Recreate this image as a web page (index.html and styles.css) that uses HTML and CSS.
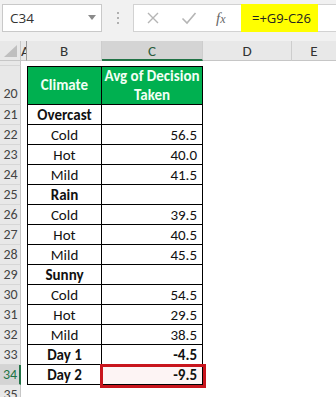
FILE: index.html
```html
<!DOCTYPE html>
<html>
<head>
<meta charset="utf-8">
<link rel="stylesheet" href="styles.css">
</head>
<body>
<div class="app">
  <div class="fbar">
    <div class="namebox">
      <span class="nb-text">C34</span>
      <svg class="nb-arrow" width="8" height="5" viewBox="0 0 8 5"><path d="M0 0h8L4 5z" fill="#8a8a8a"/></svg>
    </div>
    <div class="dots"><i></i><i></i><i></i></div>
    <div class="fbox">
      <svg class="ico" width="14" height="14" viewBox="0 0 14 14"><path d="M2 2l10 10M12 2L2 12" stroke="#b5b5b5" stroke-width="1.4" fill="none"/></svg>
      <svg class="ico chk" width="16" height="14" viewBox="0 0 16 14"><path d="M1.5 7.5l4.5 4.5L14.5 2" stroke="#b5b5b5" stroke-width="1.6" fill="none"/></svg>
      <span class="fx">f<span class="x">x</span></span>
      <div class="formula">=+G9-C26</div>
    </div>
  </div>
  <div class="sheet">
    <div class="corner"><svg width="13" height="12" viewBox="0 0 13 12"><path d="M13 0V12H0z" fill="#bfbfbf"/></svg></div>
    <div class="ch cha">A</div>
    <div class="ch">B</div>
    <div class="ch sel">C</div>
    <div class="ch">D</div>
    <div class="ch last">E</div>

    <div class="rh r19"></div><div class="c r19"></div><div class="c r19"></div><div class="c r19"></div><div class="c r19"></div><div class="c r19"></div>

    <div class="rh r20">20</div><div class="c"></div>
    <div class="t tb th">Climate</div><div class="t tc th">Avg of Decision Taken</div>
    <div class="c"></div><div class="c"></div>

    <div class="rh">21</div><div class="c"></div><div class="t tb b">Overcast</div><div class="t tc"></div><div class="c"></div><div class="c"></div>
    <div class="rh">22</div><div class="c"></div><div class="t tb">Cold</div><div class="t tc">56.5</div><div class="c"></div><div class="c"></div>
    <div class="rh">23</div><div class="c"></div><div class="t tb">Hot</div><div class="t tc">40.0</div><div class="c"></div><div class="c"></div>
    <div class="rh">24</div><div class="c"></div><div class="t tb">Mild</div><div class="t tc">41.5</div><div class="c"></div><div class="c"></div>
    <div class="rh">25</div><div class="c"></div><div class="t tb b">Rain</div><div class="t tc"></div><div class="c"></div><div class="c"></div>
    <div class="rh">26</div><div class="c"></div><div class="t tb">Cold</div><div class="t tc">39.5</div><div class="c"></div><div class="c"></div>
    <div class="rh">27</div><div class="c"></div><div class="t tb">Hot</div><div class="t tc">40.5</div><div class="c"></div><div class="c"></div>
    <div class="rh">28</div><div class="c"></div><div class="t tb">Mild</div><div class="t tc">45.5</div><div class="c"></div><div class="c"></div>
    <div class="rh">29</div><div class="c"></div><div class="t tb b">Sunny</div><div class="t tc"></div><div class="c"></div><div class="c"></div>
    <div class="rh">30</div><div class="c"></div><div class="t tb">Cold</div><div class="t tc">54.5</div><div class="c"></div><div class="c"></div>
    <div class="rh">31</div><div class="c"></div><div class="t tb">Hot</div><div class="t tc">29.5</div><div class="c"></div><div class="c"></div>
    <div class="rh">32</div><div class="c"></div><div class="t tb">Mild</div><div class="t tc">38.5</div><div class="c"></div><div class="c"></div>
    <div class="rh">33</div><div class="c"></div><div class="t tb b">Day 1</div><div class="t tc b">-4.5</div><div class="c"></div><div class="c"></div>
    <div class="rh rsel">34</div><div class="c"></div><div class="t tb b">Day 2</div><div class="t tc b csel">-9.5</div><div class="c"></div><div class="c"></div>
    <div class="rh">35</div><div class="c"></div><div class="c"></div><div class="c"></div><div class="c"></div><div class="c"></div>
    <div class="redbox"></div>
  </div>
</div>
</body>
</html>
```

FILE: styles.css
```css
html, body {
  margin: 0;
  padding: 0;
  background: #ffffff;
}
body {
  width: 336px;
  height: 397px;
  overflow: hidden;
  font-family: Carlito, Lato, "Liberation Sans", sans-serif;
}
.app {
  display: flex;
  flex-direction: column;
}
.fbar {
  height: 41px;
  background: #f1f1f1;
  display: flex;
  align-items: flex-start;
  box-sizing: border-box;
  padding-top: 4px;
}
.namebox {
  margin-left: 2px;
  width: 100px;
  height: 28px;
  box-sizing: border-box;
  background: #fff;
  border: 1px solid #c9c9c9;
  display: flex;
  align-items: center;
  justify-content: space-between;
  padding: 0 5px 0 7px;
}
.nb-text {
  font-family: "Open Sans", "Liberation Sans", sans-serif;
  font-size: 13.5px;
  color: #333;
}
.nb-arrow {
  margin-top: -2px;
}
.dots {
  width: 31px;
  height: 28px;
  display: flex;
  flex-direction: column;
  align-items: center;
  justify-content: center;
  gap: 3px;
}
.dots i {
  width: 2px;
  height: 2px;
  background: #b0b0b0;
  display: block;
}
.fbox {
  flex: 1;
  height: 28px;
  box-sizing: border-box;
  background: #fff;
  border: 1px solid #d2d2d2;
  border-right: none;
  display: flex;
  align-items: center;
  padding-left: 12px;
}
.ico {
  display: block;
  flex: none;
}
.chk {
  margin-left: 21px;
}
.fx {
  flex: none;
  margin-left: 19px;
  font-family: "Liberation Serif", serif;
  font-style: italic;
  font-size: 15px;
  color: #666;
  width: 19px;
}
.fx .x {
  font-size: 12px;
}
.formula {
  flex: none;
  margin-left: 6px;
  width: 77px;
  height: 28px;
  margin-top: -1px;
  margin-bottom: -1px;
  box-sizing: border-box;
  background: #ffff00;
  display: flex;
  align-items: center;
  padding-left: 11px;
  white-space: nowrap;
  font-family: "Open Sans", "Liberation Sans", sans-serif;
  font-size: 13px;
  color: #222;
}
.sheet {
  position: relative;
  display: grid;
  grid-template-columns: 21px 6px 75px 101px 89px 1fr;
  grid-template-rows: 20px 5px 39px repeat(15, 20px);
}
.corner {
  background: #e8e8e8;
  border-right: 1px solid #c6c6c6;
  border-bottom: 1px solid #c6c6c6;
  box-sizing: border-box;
  display: flex;
  align-items: flex-end;
  justify-content: flex-end;
  padding: 0 3px 3px 0;
}
.ch {
  background: #e8e8e8;
  border-right: 1px solid #cdcdcd;
  border-bottom: 1px solid #c6c6c6;
  box-sizing: border-box;
  display: flex;
  align-items: center;
  justify-content: center;
  font-family: Carlito, "Liberation Sans", sans-serif;
  font-size: 15px;
  color: #333;
  overflow: hidden;
}
.cha {
  justify-content: flex-start;
  padding-left: 0;
  border-right: 1px solid #9a9a9a;
}
.ch.sel {
  background: #d4d4d4;
  border-bottom: 2px solid #217346;
  color: #2a5c3d;
  padding-top: 1px;
}
.ch.last {
  border-right: none;
}
.rh {
  background: #e8e8e8;
  border-right: 1px solid #c6c6c6;
  border-bottom: 1px solid #d6d6d6;
  box-sizing: border-box;
  font-family: Carlito, "Liberation Sans", sans-serif;
  font-size: 14px;
  color: #444;
  display: flex;
  align-items: center;
  justify-content: center;
  padding-left: 1px;
}
.rh.r20 {
  align-items: flex-end;
  padding-bottom: 2px;
}
.rh.rsel {
  background: #d4d4d4;
  color: #217346;
  border-right: 2px solid #217346;
}
.c {
  background: #fff;
}
.t {
  box-sizing: border-box;
  border-right: 1px solid #000;
  border-bottom: 1px solid #000;
  font-size: 15px;
  color: #111;
  display: flex;
  align-items: center;
}
.tb {
  border-left: 1px solid #000;
  justify-content: center;
}
.tc {
  justify-content: flex-end;
  padding-right: 5px;
}
.th {
  border-top: 1px solid #000;
  background: #00b050;
  color: #f2fff4;
  font-weight: bold;
  justify-content: center;
  text-align: center;
  line-height: 19px;
  padding: 0 2px;
}
.tc.th {
  padding: 0 2px;
}
.b {
  font-weight: bold;
}
.csel {
  background: #fdf4f4;
}
.redbox {
  position: absolute;
  left: 100px;
  top: 323px;
  width: 106px;
  height: 24px;
  box-sizing: border-box;
  border: 3px solid #c8151d;
}
```
